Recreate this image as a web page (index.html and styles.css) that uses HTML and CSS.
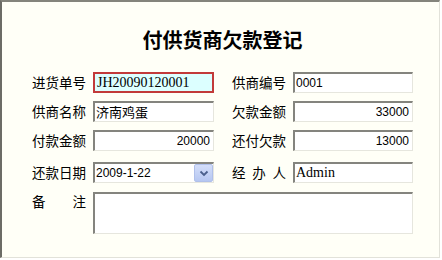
FILE: index.html
```html
<!DOCTYPE html>
<html lang="zh-CN">
<head>
<meta charset="utf-8">
<title>付供货商欠款登记</title>
<link rel="stylesheet" href="styles.css">
</head>
<body>
<div class="frame">
  <h1 class="title">付供货商欠款登记</h1>
  <div class="form">
    <div class="row">
      <label class="lbl">进货单号</label>
      <div class="field active serif">JH20090120001</div>
      <div class="sp"></div>
      <label class="lbl">供商编号</label>
      <div class="field w2 sans">0001</div>
    </div>
    <div class="row">
      <label class="lbl">供商名称</label>
      <div class="field cjk">济南鸡蛋</div>
      <div class="sp"></div>
      <label class="lbl">欠款金额</label>
      <div class="field w2 sans num">33000</div>
    </div>
    <div class="row">
      <label class="lbl">付款金额</label>
      <div class="field sans num">20000</div>
      <div class="sp"></div>
      <label class="lbl">还付欠款</label>
      <div class="field w2 sans num">13000</div>
    </div>
    <div class="row r4">
      <label class="lbl">还款日期</label>
      <div class="combo">
        <div class="combo-text sans">2009-1-22</div>
        <div class="combo-btn">
          <svg width="10" height="7" viewBox="0 0 10 7"><path d="M1.5 1.5 L5 5 L8.5 1.5" fill="none" stroke="#4a5f8c" stroke-width="1.8"/></svg>
        </div>
      </div>
      <div class="sp"></div>
      <label class="lbl spread"><span>经</span><span>办</span><span>人</span></label>
      <div class="field w2 serif">Admin</div>
    </div>
    <div class="row r5">
      <label class="lbl spread top"><span>备</span><span>注</span></label>
      <div class="memo"></div>
    </div>
  </div>
</div>
</body>
</html>
```
FILE: styles.css
```css
html, body {
  margin: 0;
  padding: 0;
  background: #ffffff;
}
.frame {
  box-sizing: border-box;
  width: 440px;
  height: 258px;
  background: #fffff7;
  border-top: 2px solid #84847c;
  border-left: 2px solid #6c6c66;
  border-right: 1px solid #e2e2da;
  border-bottom: 1px solid #e2e2da;
  font-family: "Noto Sans CJK SC", sans-serif;
  color: #000;
}
.title {
  margin: 0;
  padding: 26px 0 0 4px;
  text-align: center;
  font-size: 20px;
  line-height: 24px;
  font-weight: bold;
}
.form {
  display: flex;
  flex-direction: column;
  gap: 8px;
  padding: 20px 0 0 30px;
}
.row {
  display: flex;
  align-items: center;
  height: 21px;
}
.r4 { margin-top: 3px; }
.r5 { height: 42px; align-items: flex-start; margin-top: 1px; }
.lbl {
  width: 54px;
  margin-right: 7px;
  font-size: 13.5px;
  line-height: 21px;
  white-space: nowrap;
}
.spread {
  display: flex;
  justify-content: space-between;
}
.top { line-height: 18px; }
.sp { width: 18px; }
.field {
  box-sizing: border-box;
  width: 121px;
  height: 21px;
  background: #ffffff;
  border-top: 2px solid #84847e;
  border-left: 2px solid #84847e;
  border-right: 1px solid #e6e6de;
  border-bottom: 1px solid #e6e6de;
  padding: 0 3px 0 1px;
  line-height: 18px;
  white-space: nowrap;
  overflow: hidden;
}
.w2 { width: 120px; }
.active {
  border: 2px solid #c23a3a;
  background: #dcffff;
  padding-left: 2px;
  line-height: 17px;
}
.serif {
  font-family: "Liberation Serif", serif;
  font-size: 14px;
}
.sans {
  font-family: "Liberation Sans", sans-serif;
  font-size: 12px;
}
.cjk {
  font-size: 13px;
}
.num { text-align: right; }
.combo {
  box-sizing: border-box;
  width: 121px;
  height: 21px;
  display: flex;
  align-items: center;
  background: #ffffff;
  border-top: 2px solid #84847e;
  border-left: 2px solid #84847e;
  border-right: 1px solid #e6e6de;
  border-bottom: 1px solid #e6e6de;
}
.combo-text {
  flex: 1;
  padding-left: 1px;
  line-height: 18px;
}
.combo-btn {
  box-sizing: border-box;
  width: 19px;
  height: 18px;
  display: flex;
  align-items: center;
  justify-content: center;
  background: linear-gradient(#d4def9, #b6c7f1);
  border: 1px solid #b0c0ea;
  border-radius: 2px;
}
.memo {
  box-sizing: border-box;
  width: 320px;
  height: 42px;
  background: #ffffff;
  border-top: 2px solid #84847e;
  border-left: 2px solid #84847e;
  border-right: 1px solid #e6e6de;
  border-bottom: 1px solid #e6e6de;
}
```
